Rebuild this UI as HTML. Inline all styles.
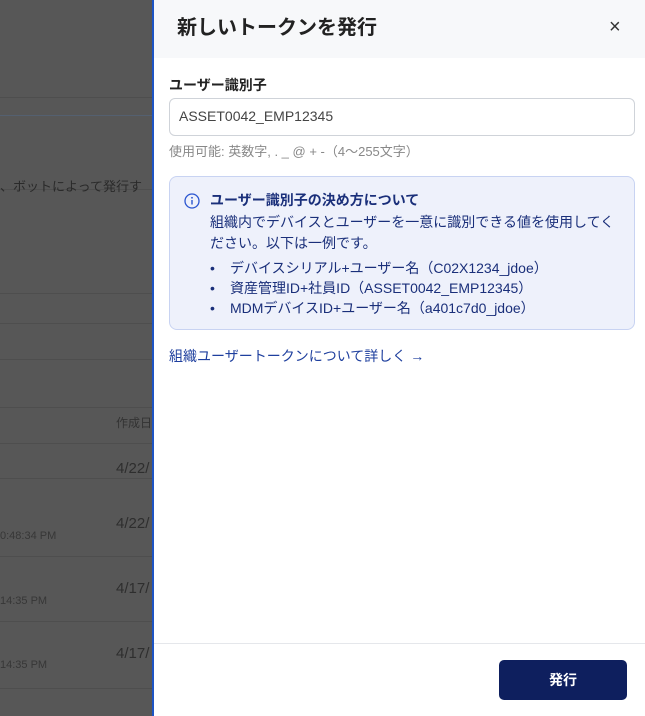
<!DOCTYPE html>
<html style="background:#575757"><head><meta charset="utf-8"><style>
*{box-sizing:border-box;margin:0;padding:0}
body{width:645px;height:716px;overflow:hidden;position:relative;background:#575757;font-family:"Liberation Sans","Noto Sans CJK JP",sans-serif}
.bg{position:absolute;left:0;top:0;width:152px;height:716px;background:#575757;color:#333}
.hl{position:absolute;left:0;width:152px;height:1px;background:#4e4e4e}
.t{position:absolute;white-space:nowrap}
.panel{position:absolute;left:152px;top:0;width:493px;height:716px;background:#fff;border-left:2px solid #1d54c4}
.hdr{height:58px;background:#f7f8fa;position:relative}
.hdr h1{position:absolute;left:23px;top:11px;font-size:20px;font-weight:bold;color:#222;}
.x{position:absolute;left:455px;top:16px;font-size:20px;color:#333}
.lbl{position:absolute;left:15px;top:75px;font-size:14px;font-weight:bold;color:#222}
.inp{position:absolute;left:15px;top:98px;width:466px;height:38px;border:1px solid #cfd3d9;border-radius:6px;font-size:14px;color:#444;padding:9px 9px}
.help{position:absolute;left:15px;top:141px;font-size:13px;color:#888}
.box{position:absolute;left:15px;top:176px;width:466px;height:154px;background:#eef1fb;border:1px solid #c8d3f2;border-radius:8px;color:#1a2f7a;font-size:14px}
.box .ttl{position:absolute;left:40px;top:13px;font-weight:bold;font-size:14px}
.box .p{position:absolute;left:40px;top:35px;line-height:21px;width:412px}
.box ul{position:absolute;left:40px;top:81px;list-style:none;line-height:20px}
.box li:before{content:"•";display:inline-block;width:20px}
.link{position:absolute;left:15px;top:346px;font-size:14px;color:#1e3f9e}
.ft{position:absolute;left:0;top:643px;width:491px;height:1px;background:#e5e7eb}
.btn{position:absolute;left:345px;top:660px;width:128px;height:40px;background:#0e1f5e;border-radius:5px;color:#fff;font-weight:bold;font-size:14px;text-align:center;line-height:40px}
</style></head><body>
<div class="bg">
<div class="hl" style="top:97px"></div>
<div class="hl" style="top:115px;background:#546070"></div>
<div class="hl" style="top:189px"></div>
<div class="t" style="left:0;top:176px;font-size:13px;color:#2a2a2a">、ボットによって発行す</div>
<div class="hl" style="top:293px"></div>
<div class="hl" style="top:323px"></div>
<div class="hl" style="top:359px"></div>
<div class="t" style="left:116px;top:414px;font-size:12px;color:#333">作成日</div>
<div class="hl" style="top:407px"></div>
<div class="hl" style="top:443px"></div>
<div class="t" style="left:116px;top:460px;font-size:15px;color:#2e2e2e">4/22/</div>
<div class="hl" style="top:478px"></div>
<div class="t" style="left:116px;top:515px;font-size:15px;color:#2e2e2e">4/22/</div>
<div class="t" style="left:0;top:530px;font-size:11px;color:#373737">0:48:34 PM</div>
<div class="hl" style="top:556px"></div>
<div class="t" style="left:116px;top:580px;font-size:15px;color:#2e2e2e">4/17/</div>
<div class="t" style="left:0;top:595px;font-size:11px;color:#373737">14:35 PM</div>
<div class="hl" style="top:621px"></div>
<div class="t" style="left:116px;top:645px;font-size:15px;color:#2e2e2e">4/17/</div>
<div class="t" style="left:0;top:659px;font-size:11px;color:#373737">14:35 PM</div>
<div class="hl" style="top:688px"></div>
</div>
<div class="panel">
<div class="hdr"><h1>新しいトークンを発行</h1><div class="x">×</div></div>
<div class="lbl">ユーザー識別子</div>
<div class="inp">ASSET0042_EMP12345</div>
<div class="help">使用可能: 英数字, . _ @ + -（4〜255文字）</div>
<div class="box">
<svg style="position:absolute;left:14px;top:16px" width="16" height="16" viewBox="0 0 16 16"><circle cx="8" cy="8" r="7" fill="none" stroke="#2a55d0" stroke-width="1.3"/><line x1="8" y1="7" x2="8" y2="11.5" stroke="#2a55d0" stroke-width="1.4"/><circle cx="8" cy="4.8" r="0.9" fill="#2a55d0"/></svg>
<div class="ttl">ユーザー識別子の決め方について</div>
<div class="p">組織内でデバイスとユーザーを一意に識別できる値を使用してく<br>ださい。以下は一例です。</div>
<ul><li>デバイスシリアル+ユーザー名（C02X1234_jdoe）</li><li>資産管理ID+社員ID（ASSET0042_EMP12345）</li><li>MDMデバイスID+ユーザー名（a401c7d0_jdoe）</li></ul>
</div>
<div class="link">組織ユーザートークンについて詳しく →</div>
<div class="ft"></div>
<div class="btn">発行</div>
</div>
</body></html>
